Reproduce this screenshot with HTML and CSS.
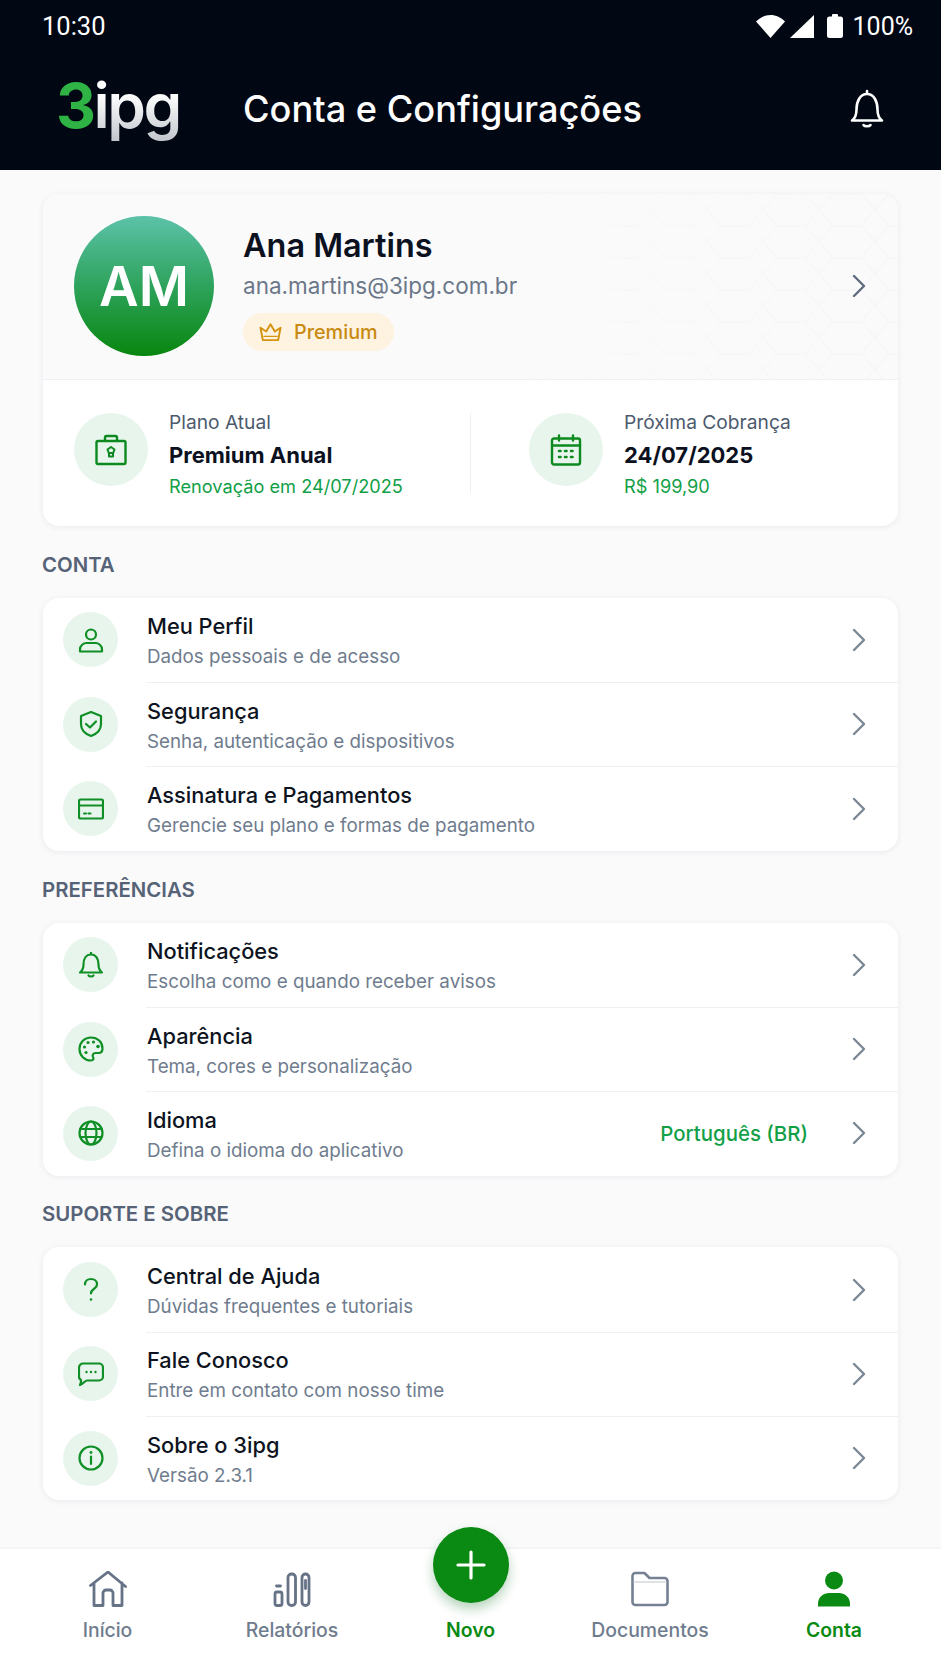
FILE: index.html
```html
<!DOCTYPE html>
<html lang="pt-BR">
<head>
<meta charset="utf-8">
<title>Conta e Configurações</title>
<link rel="stylesheet" href="styles.css">
</head>
<body>
<div class="app">
  <header class="header">
    <div class="status">
      <span class="time">10:30</span>
      <div class="status-right">
        <svg class="st-wifi" viewBox="0 0 29 23"><path d="M0 6.500C4 2.500 9 0 14.500 0S25 2.500 29 6.500L14.500 23z" fill="#fff"/></svg>
        <svg class="st-signal" viewBox="0 0 24 23"><path d="M24 0v23H0z" fill="#fff"/></svg>
        <svg class="st-batt" viewBox="0 0 16 24"><path d="M5 2.500V1a1 1 0 0 1 1-1h4a1 1 0 0 1 1 1v1.500h2.500A2.500 2.500 0 0 1 16 5v16.500a2.500 2.500 0 0 1-2.500 2.500h-11A2.500 2.500 0 0 1 0 21.500V5a2.500 2.500 0 0 1 2.500-2.500z" fill="#fff"/></svg>
        <span class="pct">100%</span>
      </div>
    </div>
    <div class="appbar">
      <div class="logo"><span class="logo-3">3</span><span class="logo-ipg">ipg</span></div>
      <h1 class="title">Conta e Configurações</h1>
      <svg class="bell" viewBox="0 0 40 40" fill="none" stroke="#fff" stroke-width="2.600" stroke-linecap="round" stroke-linejoin="round"><path d="M20 2v3M5 31.500h30c-3.500-2.500-4.500-6-4.500-11 0-8-3.500-15.500-10.500-15.500S9.500 12.500 9.500 20.500c0 5-1 8.500-4.500 11z"/><path d="M16.500 36c1 1.700 6 1.700 7 0"/></svg>
    </div>
  </header>

  <main class="main">
    <section class="card profile">
      <div class="profile-top">
        <svg class="pattern" aria-hidden="true"><defs><pattern id="hex" width="56" height="64" patternUnits="userSpaceOnUse"><path d="M14 0h28l14 16-14 16H14L0 16zM0 48l14-16M56 48 42 32M14 64 0 48h0M42 64l14-16M14 64h28" fill="none" stroke="#f0f2f5" stroke-width="1"/></pattern><linearGradient id="fade" x1="0" x2="1" y1="0" y2="0"><stop offset="0" stop-color="#fff" stop-opacity="0"/><stop offset="1" stop-color="#fff" stop-opacity=".9"/></linearGradient><mask id="fm"><rect width="100%" height="100%" fill="url(#fade)"/></mask></defs><rect width="100%" height="100%" fill="url(#hex)" mask="url(#fm)"/></svg>
        <div class="avatar">AM</div>
        <div class="who">
          <div class="name">Ana Martins</div>
          <div class="email">ana.martins@3ipg.com.br</div>
          <div class="badge">
            <svg class="crown" viewBox="0 0 24 20" fill="none" stroke="#d6930f" stroke-width="2" stroke-linejoin="round" stroke-linecap="round"><path d="M4 18.500 1.500 5.500 7.500 9.500 12 2l4.500 7.500 6-4-2.500 13z"/><path d="M5 14.500h14" stroke-width="1.200"/></svg>
            <span>Premium</span>
          </div>
        </div>
        <svg class="chev chev-dark" viewBox="0 0 16 26"><path d="M3 3l10 10L3 23"/></svg>
      </div>
      <div class="plans">
        <div class="plan plan-a">
          <div class="dot dot-lg">
            <svg class="ic-lg" viewBox="0 0 32 32" fill="none" stroke="#0d8a1f" stroke-width="2.400" stroke-linejoin="round"><rect x="1.500" y="7" width="29" height="23" rx="1.500"/><path d="M10 7V3.500A1.500 1.500 0 0 1 11.500 2h9A1.500 1.500 0 0 1 22 3.500V7"/><path d="M16 13l3.500 2.500-1.300 3.500h-4.400l-1.300-3.500zM14 19v3.500h4V19" stroke-width="2"/></svg>
          </div>
          <div class="plan-text">
            <div class="plan-label">Plano Atual</div>
            <div class="plan-value">Premium Anual</div>
            <div class="plan-note">Renovação em 24/07/2025</div>
          </div>
        </div>
        <div class="plan plan-b">
          <div class="dot dot-lg">
            <svg class="ic-lg" viewBox="0 0 32 32" fill="none" stroke="#0d8a1f" stroke-width="2.400" stroke-linejoin="round" stroke-linecap="round"><rect x="2" y="4.500" width="28" height="26" rx="2"/><path d="M2 11.500h28M9 1.500v5M23 1.500v5"/><path d="M9 17h1.500M15 17h1.500M21 17h1.500M9 23h1.500M15 23h1.500M21 23h1.500" stroke-width="2.600"/></svg>
          </div>
          <div class="plan-text">
            <div class="plan-label">Próxima Cobrança</div>
            <div class="plan-value">24/07/2025</div>
            <div class="plan-note">R$ 199,90</div>
          </div>
        </div>
      </div>
    </section>

    <h2 class="section">CONTA</h2>
    <section class="card list">
      <div class="row">
        <div class="dot"><svg class="ic" viewBox="0 0 26 26"><circle cx="13" cy="7.500" r="5"/><path d="M2 24.500v-2c0-4 3.500-6.500 6.500-6.500h9c3 0 6.500 2.500 6.500 6.500v2z"/></svg></div>
        <div class="row-text"><div class="row-title">Meu Perfil</div><div class="row-sub">Dados pessoais e de acesso</div></div>
        <svg class="chev" viewBox="0 0 16 26"><path d="M3 3l10 10L3 23"/></svg>
      </div>
      <div class="row">
        <div class="dot"><svg class="ic" viewBox="0 0 26 26"><path d="M13 1l10 4v8c0 6-4.500 10-10 12C7.500 23 3 19 3 13V5z"/><path d="M8 13l4 3.500 6-6"/></svg></div>
        <div class="row-text"><div class="row-title">Segurança</div><div class="row-sub">Senha, autenticação e dispositivos</div></div>
        <svg class="chev" viewBox="0 0 16 26"><path d="M3 3l10 10L3 23"/></svg>
      </div>
      <div class="row">
        <div class="dot"><svg class="ic" viewBox="0 0 26 26"><rect x="1" y="3.500" width="24" height="19" rx="1.500"/><path d="M1 9.500h24M6 17.500h2M10.500 17.500h2"/></svg></div>
        <div class="row-text"><div class="row-title">Assinatura e Pagamentos</div><div class="row-sub">Gerencie seu plano e formas de pagamento</div></div>
        <svg class="chev" viewBox="0 0 16 26"><path d="M3 3l10 10L3 23"/></svg>
      </div>
    </section>

    <h2 class="section">PREFERÊNCIAS</h2>
    <section class="card list">
      <div class="row">
        <div class="dot"><svg class="ic" viewBox="0 0 26 26"><path d="M13 .500v2M2 20.500h22c-2.500-2-3.500-4.500-3.500-8C20.500 7 18 2.500 13 2.500S5.500 7 5.500 12.500c0 3.500-1 6-3.500 8z"/><path d="M10.500 23.500c.7 1.300 4.300 1.300 5 0"/></svg></div>
        <div class="row-text"><div class="row-title">Notificações</div><div class="row-sub">Escolha como e quando receber avisos</div></div>
        <svg class="chev" viewBox="0 0 16 26"><path d="M3 3l10 10L3 23"/></svg>
      </div>
      <div class="row">
        <div class="dot"><svg class="ic" viewBox="0 0 26 26"><path d="M13 1.500C6.500 1.500 1.500 6.500 1.500 13S6.500 24.500 13 24.500c2.500 0 3-1.800 2-3.500-1-2 .3-4 2.500-4h3c2.700 0 4-2 4-4.500C24.500 6 19.500 1.500 13 1.500z"/><g class="ic-fill"><circle cx="6.500" cy="11" r="1.600"/><circle cx="10" cy="6.500" r="1.600"/><circle cx="15.500" cy="6" r="1.600"/><circle cx="20" cy="10.500" r="1.800"/><circle cx="8" cy="16.500" r="1.600"/></g></svg></div>
        <div class="row-text"><div class="row-title">Aparência</div><div class="row-sub">Tema, cores e personalização</div></div>
        <svg class="chev" viewBox="0 0 16 26"><path d="M3 3l10 10L3 23"/></svg>
      </div>
      <div class="row">
        <div class="dot"><svg class="ic" viewBox="0 0 26 26"><circle cx="13" cy="13" r="11.500"/><ellipse cx="13" cy="13" rx="5.500" ry="11.500"/><path d="M2.500 9h21M2.500 17h21"/></svg></div>
        <div class="row-text"><div class="row-title">Idioma</div><div class="row-sub">Defina o idioma do aplicativo</div></div>
        <span class="row-value">Português (BR)</span>
        <svg class="chev" viewBox="0 0 16 26"><path d="M3 3l10 10L3 23"/></svg>
      </div>
    </section>

    <h2 class="section">SUPORTE E SOBRE</h2>
    <section class="card list">
      <div class="row">
        <div class="dot"><svg class="ic" viewBox="0 0 26 26"><path d="M7 7.500C7 4 9.800 2 13 2s6 2 6 5.200c0 2.400-1.500 3.600-3.200 4.800-1.700 1.200-2.800 2.300-2.800 4.500"/><circle class="ic-fill" cx="13" cy="22.500" r="1.300"/></svg></div>
        <div class="row-text"><div class="row-title">Central de Ajuda</div><div class="row-sub">Dúvidas frequentes e tutoriais</div></div>
        <svg class="chev" viewBox="0 0 16 26"><path d="M3 3l10 10L3 23"/></svg>
      </div>
      <div class="row">
        <div class="dot"><svg class="ic" viewBox="0 0 26 26"><path d="M5 2.500h16a4 4 0 0 1 4 4v9a4 4 0 0 1-4 4H9c-2 0-3 3-7 4.500 1-2 1.200-3 1-5a4 4 0 0 1-2-3.500v-9a4 4 0 0 1 4-4z"/><g class="ic-fill"><circle cx="8.500" cy="11" r="1.200"/><circle cx="13" cy="11" r="1.200"/><circle cx="17.500" cy="11" r="1.200"/></g></svg></div>
        <div class="row-text"><div class="row-title">Fale Conosco</div><div class="row-sub">Entre em contato com nosso time</div></div>
        <svg class="chev" viewBox="0 0 16 26"><path d="M3 3l10 10L3 23"/></svg>
      </div>
      <div class="row">
        <div class="dot"><svg class="ic" viewBox="0 0 26 26"><circle cx="13" cy="13" r="11.500"/><path d="M13 11.500v7.500"/><circle class="ic-fill" cx="13" cy="7.500" r="1.400"/></svg></div>
        <div class="row-text"><div class="row-title">Sobre o 3ipg</div><div class="row-sub">Versão 2.3.1</div></div>
        <svg class="chev" viewBox="0 0 16 26"><path d="M3 3l10 10L3 23"/></svg>
      </div>
    </section>
  </main>

  <nav class="nav">
    <div class="tab">
      <svg class="tab-ic" viewBox="0 0 38 36" fill="none" stroke="#667386" stroke-width="2.800" stroke-linejoin="round" stroke-linecap="round"><path d="M1.500 14.500 19 1l17.500 14.500M5 12v22.500h9V22a3 3 0 0 1 3-3h4a3 3 0 0 1 3 3v12.500h9V12"/></svg>
      <span>Início</span>
    </div>
    <div class="tab">
      <svg class="tab-ic" viewBox="0 0 38 36" fill="none" stroke="#667386" stroke-width="2.800" stroke-linejoin="round" stroke-linecap="round"><rect x="2" y="21" width="7" height="13.500" rx="2"/><rect x="15" y="3" width="7.500" height="31.500" rx="3.500"/><rect x="29" y="3" width="7" height="31.500" rx="3.500"/><path d="M3.500 15h4M32.500 9.500v8"/></svg>
      <span>Relatórios</span>
    </div>
    <div class="tab tab-new">
      <button class="fab" type="button" aria-label="Novo"><svg viewBox="0 0 30 30" fill="none" stroke="#fff" stroke-width="3.200" stroke-linecap="round"><path d="M15 2v26M2 15h26"/></svg></button>
      <span>Novo</span>
    </div>
    <div class="tab">
      <svg class="tab-ic" viewBox="0 0 38 36" fill="none" stroke="#758193" stroke-width="2.600" stroke-linejoin="round"><path d="M1.500 5A3 3 0 0 1 4.500 2h9l5 5h15a3 3 0 0 1 3 3v21a3 3 0 0 1-3 3h-29a3 3 0 0 1-3-3z"/><path d="M2.500 11h33" stroke="#d3d7de" stroke-width="1.500"/></svg>
      <span>Documentos</span>
    </div>
    <div class="tab tab-active">
      <svg class="tab-ic" viewBox="0 0 38 36" fill="#0a8a12"><circle cx="19" cy="9.500" r="9"/><path d="M3 35.500v-3C3 26 9 22 14 22h10c5 0 11 4 11 10.500v3z"/></svg>
      <span>Conta</span>
    </div>
  </nav>
</div>
</body>
</html>
```
FILE: styles.css
```css
* { box-sizing: border-box; margin: 0; padding: 0; }
html, body { height: 100%; }
body { font-family: Inter, "Noto Sans", sans-serif; background: #fafafb; color: #0d1320; overflow: hidden; }
.app { height: 1672px; display: flex; flex-direction: column; }

.header { height: 170px; background: #020714; color: #fff; padding: 0 28px 0 42px; flex: none; }
.status { height: 52px; display: flex; align-items: center; justify-content: space-between; }
.time { font-family: Roboto, sans-serif; font-size: 25.500px; }
.status-right { display: flex; align-items: center; }
.pct { font-family: Roboto, sans-serif; font-size: 25px; margin-left: 10px; }
.st-wifi { width: 29px; height: 23px; }
.st-signal { width: 24px; height: 23px; margin-left: 5px; }
.st-batt { width: 16px; height: 24px; margin-left: 13px; }
.appbar { display: flex; align-items: center; height: 114px; }
.logo { width: 187px; margin-left: 14px; margin-bottom: 7px; font-size: 62px; font-weight: 600; letter-spacing: -2.500px; line-height: 1; }
.logo-3 { color: #2fb344; font-weight: 700; }
.logo-ipg { background: linear-gradient(180deg, #fff 35%, #bfc3ca 100%); -webkit-background-clip: text; background-clip: text; color: transparent; }
.title { font-size: 36.200px; font-weight: 500; flex: 1; letter-spacing: 0; }
.bell { width: 40px; height: 40px; margin-right: 26px; }

.main { flex: 1; padding: 24px 43px 0; min-height: 0; }
.card { background: #fff; border-radius: 16px; box-shadow: 0 1px 6px rgba(30, 45, 70, .08); overflow: hidden; }
.profile-top { position: relative; height: 186px; padding: 22px 31px 0 31px; display: flex; background: #fafafb; border-bottom: 1px solid #eef0f3; }
.pattern { position: absolute; left: 440px; top: 0; width: 415px; height: 186px; }
.avatar, .who, .chev-dark { position: relative; }
.avatar { width: 140px; height: 140px; border-radius: 50%; flex: none; background: linear-gradient(180deg, #5cc2a8 0%, #2ea35c 50%, #08860f 100%); color: #fff; font-size: 54.500px; font-weight: 600; display: flex; align-items: center; justify-content: center; }
.who { margin-left: 29px; flex: 1; padding-top: 10px; }
.name { font-size: 32.400px; font-weight: 600; line-height: 40px; color: #0b111f; }
.email { font-size: 22.500px; line-height: 30px; color: #6b7789; margin-top: 5px; }
.badge { display: inline-flex; align-items: center; height: 38px; margin-top: 12px; padding: 0 16px; border-radius: 19px; background: #fdf3e0; color: #c98a12; font-size: 19.800px; font-weight: 500; }
.crown { width: 23px; height: 20px; margin-right: 12px; }
.chev { width: 16px; height: 26px; flex: none; fill: none; stroke: #7b8796; stroke-width: 2.400; stroke-linecap: round; stroke-linejoin: round; }
.chev-dark { stroke: #5f6c7e; margin-top: 57px; }

.plans { display: flex; height: 146px; align-items: center; }
.plan { display: flex; align-items: center; height: 80px; }
.plan-a { width: 428px; padding-left: 31px; border-right: 1px solid #eef0f3; }
.plan-b { padding-left: 58px; }
.dot { width: 55px; height: 55px; border-radius: 50%; background: #e7f5ec; display: flex; align-items: center; justify-content: center; flex: none; }
.dot-lg { width: 74px; height: 73px; margin-bottom: 7px; }
.ic-lg { width: 32px; height: 32px; }
.plan-text { margin-left: 21px; margin-top: 2px; }
.plan-label { font-size: 19.200px; line-height: 26px; margin-bottom: 3px; color: #4c5a6d; }
.plan-value { font-size: 22px; font-weight: 700; line-height: 34px; color: #0b111f; }
.plan-note { font-size: 18.200px; line-height: 28px; color: #12a047; }

.section { font-size: 20.400px; font-weight: 600; color: #566377; line-height: 24px; margin: 26.800px 0 21px -1px; }
.row { display: flex; align-items: center; height: 84.330px; padding-left: 20px; padding-right: 31px; position: relative; }
.row + .row::before { content: ""; position: absolute; left: 103px; right: 0; top: 0; height: 1px; background: #eef0f3; }
.row-text { margin-left: 29px; flex: 1; padding-top: 2px; }
.row-title { font-size: 21.800px; font-weight: 450; line-height: 30px; color: #0d1320; }
.row-sub { font-size: 18.800px; line-height: 26px; margin-top: 3px; color: #6f7c8e; }
.row-value { font-size: 20.400px; font-weight: 500; color: #12a047; margin-right: 43px; }
.ic { width: 26px; height: 26px; fill: none; stroke: #0f8f25; stroke-width: 2.200; stroke-linecap: round; stroke-linejoin: round; }
.ic-fill { fill: #0f8f25; stroke: none; }

.nav { height: 123px; flex: none; background: #fff; display: flex; position: relative; box-shadow: 0 -1px 2px rgba(30, 45, 70, .05); }
.tab { flex: none; display: flex; flex-direction: column; align-items: center; color: #6f7c8e; font-size: 19.400px; font-weight: 450; padding-top: 22px; }
.tab:nth-child(1) { width: 215px; }
.tab:nth-child(2) { width: 154px; }
.tab:nth-child(3) { width: 203px; }
.tab:nth-child(4) { width: 156px; }
.tab:nth-child(5) { width: 212px; }
.tab span { margin-top: 10px; line-height: 26px; }
.tab-ic { width: 38px; height: 36px; }
.tab-new, .tab-active { color: #0a8a12; font-weight: 600; }
.tab-new { padding-top: 58px; position: relative; }
.fab { position: absolute; left: 64px; top: -22px; width: 76px; height: 76px; border-radius: 50%; border: none; background: #0a8a12; box-shadow: 0 6px 12px rgba(10, 110, 30, .3); display: flex; align-items: center; justify-content: center; }
.fab svg { width: 30px; height: 30px; }
```
